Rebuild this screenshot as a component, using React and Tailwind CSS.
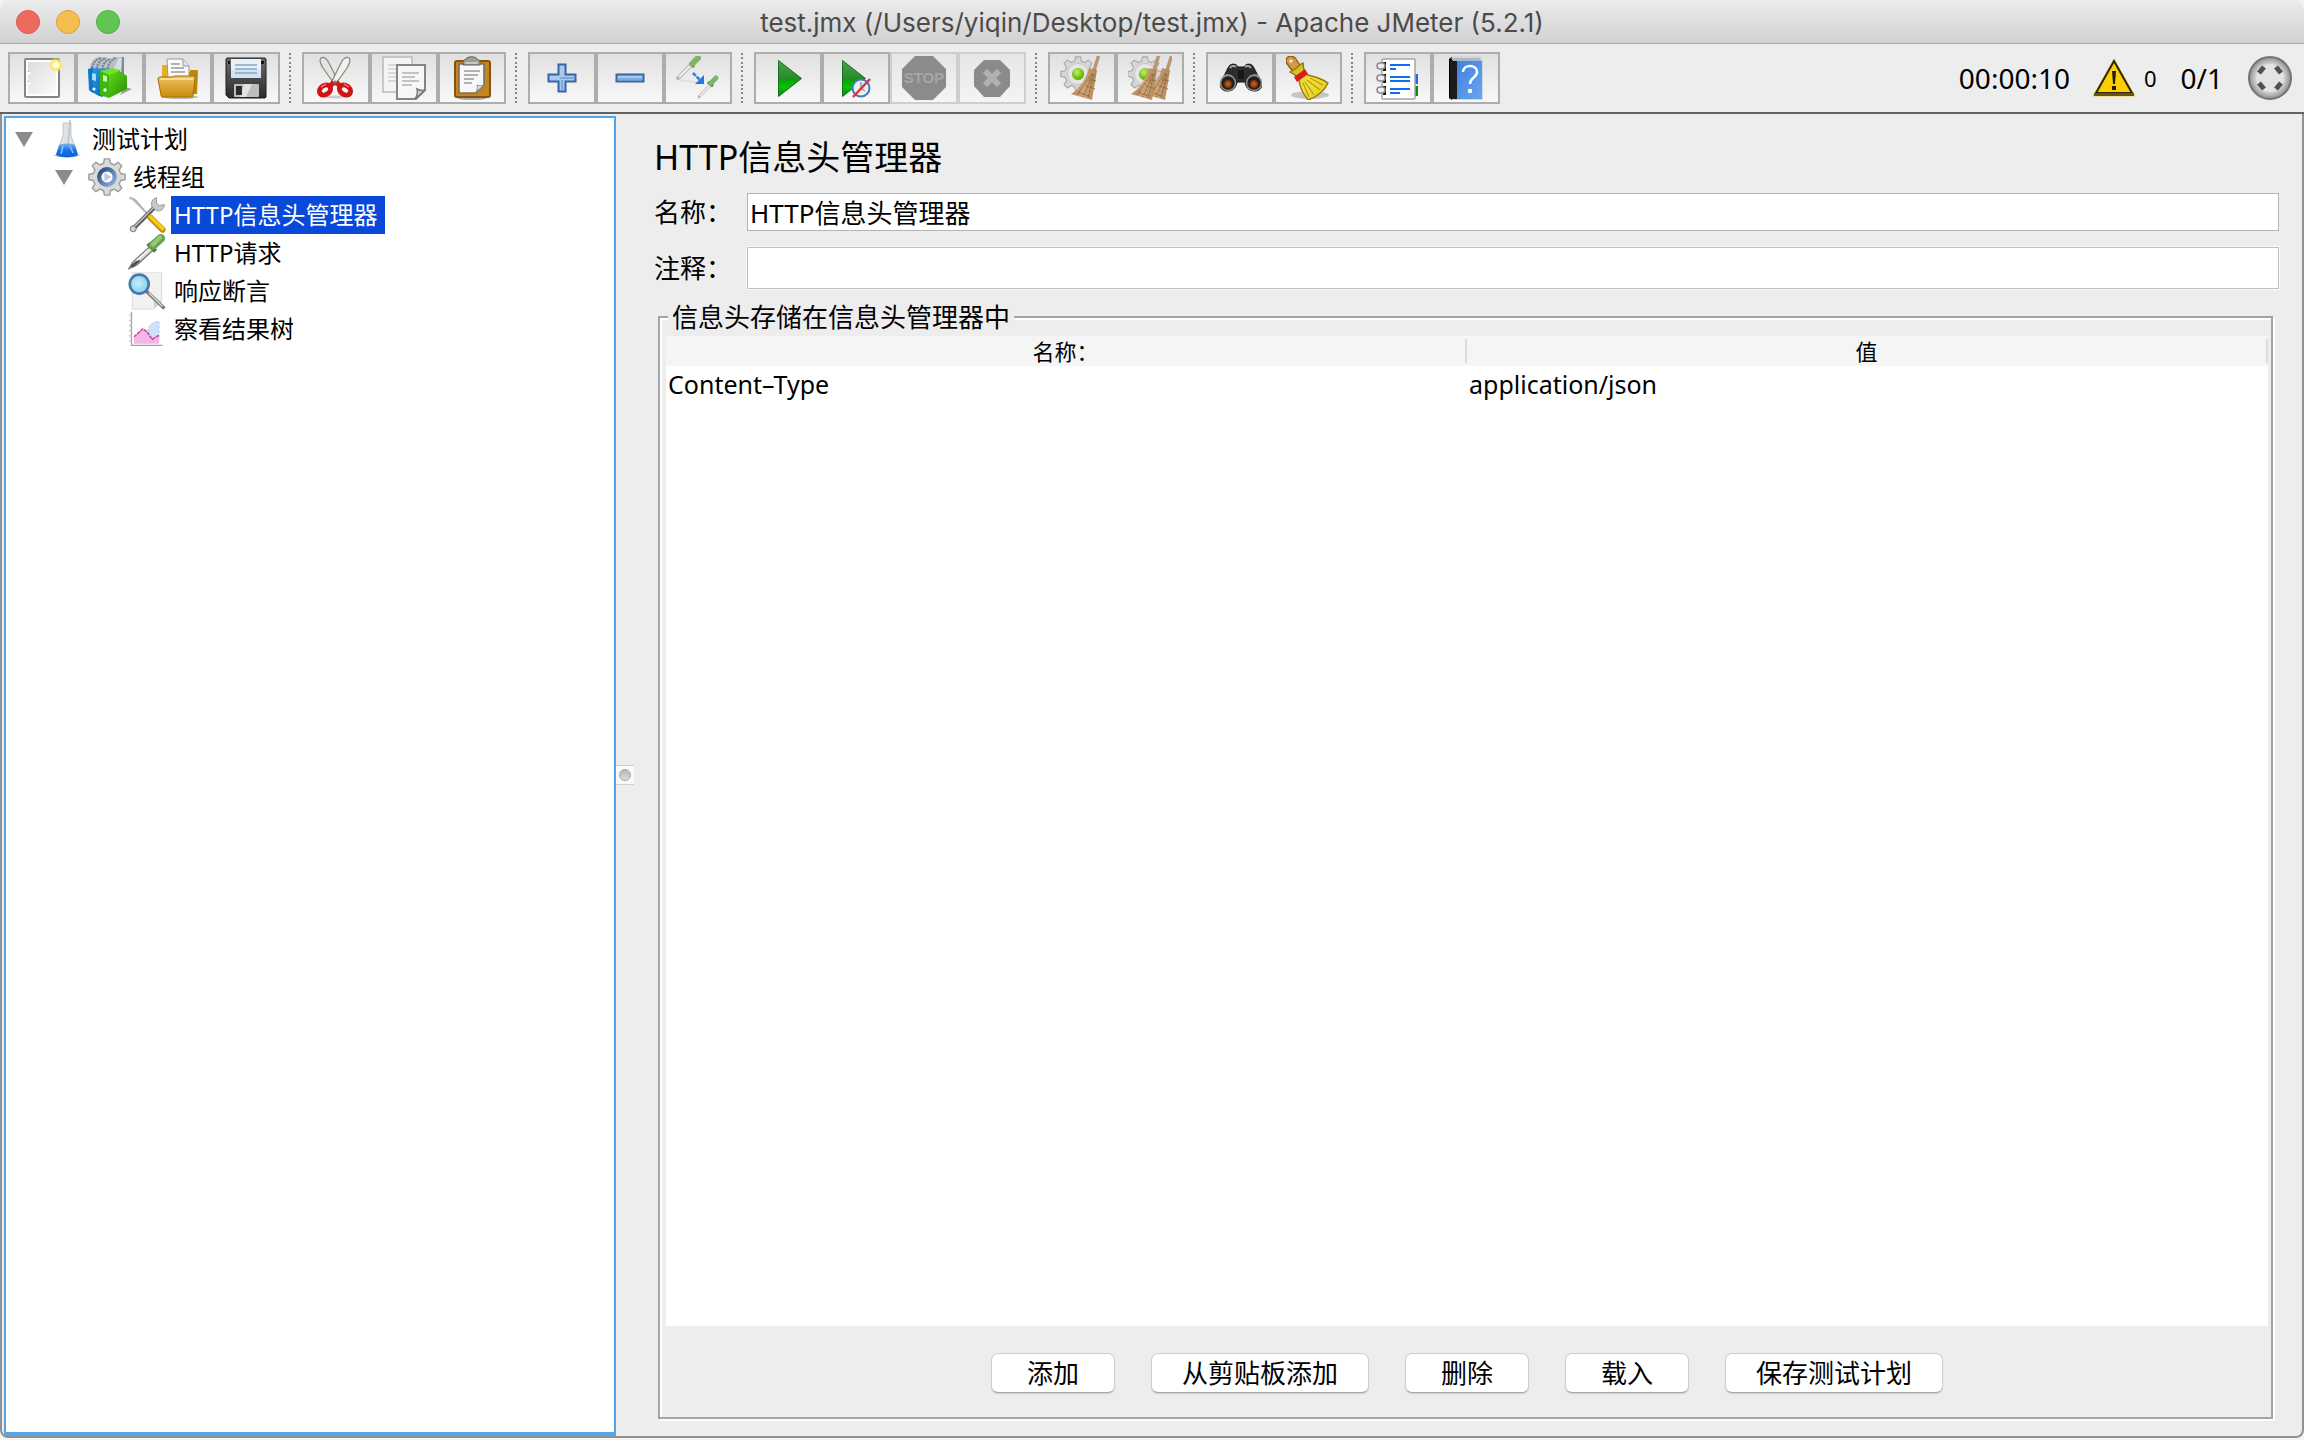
import React, { useState } from "react";

const GEAR =
  "M19 1h6l1 5 4 2 5-3 4 4-3 5 2 4 5 1v6l-5 1-2 4 3 5-4 4-5-3-4 2-1 5h-6l-1-5-4-2-5 3-4-4 3-5-2-4-5-1v-6l5-1 2-4-3-5 4-4 5 3 4-2z";

function Svg({ children, className = "size-11" }) {
  return (
    <svg viewBox="0 0 44 44" className={className} aria-hidden="true">
      {children}
    </svg>
  );
}

function Gradients() {
  return (
    <svg className="absolute size-0" aria-hidden="true">
      <defs>
        <linearGradient id="paper" x1="0" y1="0" x2="1" y2="1">
          <stop offset="0" stopColor="#dcdcdc" />
          <stop offset="1" stopColor="#fbfbfb" />
        </linearGradient>
        <linearGradient id="gold" x1="0" y1="0" x2="0" y2="1">
          <stop offset="0" stopColor="#eec366" />
          <stop offset="1" stopColor="#c98a08" />
        </linearGradient>
        <linearGradient id="green" x1="0" y1="0" x2="0" y2="1">
          <stop offset="0" stopColor="#4fa254" />
          <stop offset="0.48" stopColor="#2c8a2c" />
          <stop offset="0.52" stopColor="#06a006" />
          <stop offset="0.75" stopColor="#05c405" />
          <stop offset="1" stopColor="#0c7a0c" />
        </linearGradient>
        <linearGradient id="binderGreen" x1="0" y1="0" x2="1" y2="1">
          <stop offset="0" stopColor="#5edb12" />
          <stop offset="1" stopColor="#2c8c08" />
        </linearGradient>
        <linearGradient id="binderBlue" x1="0" y1="0" x2="1" y2="1">
          <stop offset="0" stopColor="#2fa0ec" />
          <stop offset="1" stopColor="#0b6cb5" />
        </linearGradient>
        <linearGradient id="disk" x1="0" y1="0" x2="0" y2="1">
          <stop offset="0" stopColor="#6a6a6c" />
          <stop offset="1" stopColor="#2b2b2d" />
        </linearGradient>
        <linearGradient id="straw" x1="0" y1="0" x2="1" y2="0">
          <stop offset="0" stopColor="#b98b5a" />
          <stop offset="0.5" stopColor="#cda377" />
          <stop offset="1" stopColor="#b08556" />
        </linearGradient>
        <linearGradient id="yellow" x1="0" y1="0" x2="1" y2="1">
          <stop offset="0" stopColor="#c7a60c" />
          <stop offset="0.5" stopColor="#f3e23c" />
          <stop offset="1" stopColor="#e0c818" />
        </linearGradient>
        <linearGradient id="book" x1="0" y1="0" x2="1" y2="1">
          <stop offset="0" stopColor="#3f83dd" />
          <stop offset="1" stopColor="#69a4ee" />
        </linearGradient>
        <linearGradient id="flaskBlue" x1="0" y1="0" x2="0" y2="1">
          <stop offset="0" stopColor="#7db4ee" />
          <stop offset="0.5" stopColor="#1673e8" />
          <stop offset="1" stopColor="#0b5fd6" />
        </linearGradient>
        <linearGradient id="blueRing" x1="0" y1="0" x2="1" y2="1">
          <stop offset="0" stopColor="#28467c" />
          <stop offset="1" stopColor="#8fb2e0" />
        </linearGradient>
        <radialGradient id="sun">
          <stop offset="0" stopColor="#fffef0" />
          <stop offset="0.45" stopColor="#fdf9b8" />
          <stop offset="0.65" stopColor="#f6e660" />
          <stop offset="1" stopColor="#f6e660" stopOpacity="0.2" />
        </radialGradient>
        <radialGradient id="lime" cx="0.4" cy="0.35">
          <stop offset="0" stopColor="#c5f070" />
          <stop offset="1" stopColor="#6cb80e" />
        </radialGradient>
        <radialGradient id="lens">
          <stop offset="0" stopColor="#c06a28" />
          <stop offset="0.6" stopColor="#8a3f10" />
          <stop offset="1" stopColor="#2b1508" />
        </radialGradient>
        <radialGradient id="glass" cx="0.45" cy="0.45">
          <stop offset="0" stopColor="#c4f0fb" />
          <stop offset="1" stopColor="#8bd2ee" />
        </radialGradient>
        <radialGradient id="orb" cx="0.5" cy="0.5">
          <stop offset="0" stopColor="#f2f2f2" />
          <stop offset="0.7" stopColor="#cccccc" />
          <stop offset="1" stopColor="#8d8d8d" />
        </radialGradient>
        <linearGradient id="dot" x1="0" y1="0" x2="0" y2="1">
          <stop offset="0" stopColor="#b4b4b4" />
          <stop offset="1" stopColor="#dedede" />
        </linearGradient>
      </defs>
    </svg>
  );
}

const NewIcon = () => (
  <Svg>
    <rect x="5" y="3" width="34" height="38" rx="1" fill="#fff" stroke="#858585" strokeWidth="2" />
    <rect x="8" y="6" width="28" height="32" fill="url(#paper)" />
    <circle cx="9" cy="17" r="1.5" fill="#fff" />
    <circle cx="9" cy="27" r="1.5" fill="#fff" />
    <path d="M8 15.500h1M8 25.500h1" stroke="#999" />
    <circle cx="36" cy="9" r="7" fill="url(#sun)" />
  </Svg>
);

const TemplatesIcon = () => (
  <Svg>
    <path d="M37 31l7 2-12 6z" fill="#777" opacity=".7" />
    <path d="M2 14C2 6 5 3 10 1h8l3 2 4-2h10v22H3z" fill="#b9c0c5" />
    <path d="M4 12C5 6 9 3 13 2M9 13c0-6 4-9 9-11M14 14c1-6 3-9 8-11M20 13c0-5 3-9 8-11" stroke="#6f7a82" strokeWidth="1.800" strokeDasharray="2 1" fill="none" />
    <path d="M26 12l5-10h4v21h-9z" fill="#d6dde1" />
    <path d="M34 1h2v21h-3z" fill="#7f8a91" />
    <path d="M26 13l6 1v10h-6z" fill="#56b2ee" />
    <path d="M0 13l5-1 10 1v28l-4-1-9-5z" fill="url(#binderBlue)" />
    <path d="M0 13l5-1v25l-4-3z" fill="#0d79c6" />
    <path d="M4 17l4 1v7l-4-1z" fill="#a5dbfb" />
    <path d="M14 12l11 1-4 6-9-3z" fill="#2596e2" />
    <circle cx="6" cy="33" r="1.600" fill="#fff" />
    <path d="M12 15l9 3v24l-9-3z" fill="#3fb80e" />
    <path d="M21 18l9-4 9 6v13L21 42z" fill="url(#binderGreen)" />
    <path d="M12 15l13-3 7 3-11 4z" fill="#72e32c" />
    <path d="M15 19l4 1v6l-4-1z" fill="#c9f8ab" />
    <circle cx="17" cy="34" r="1.700" fill="#fff" />
  </Svg>
);

const OpenIcon = () => (
  <Svg>
    <ellipse cx="24" cy="41" rx="18" ry="2" fill="#bbb" />
    <path d="M6 11c0-1 1-2 2-2h4v7h22V14h7c1 0 1 1 1 2l-1 22H8z" fill="#c08409" />
    <path d="M6 11c0-1 1-2 2-2h4v12H6z" fill="#e8ac2b" />
    <path d="M11 3h16l6 7v12H12z" fill="#fafafa" stroke="#9b9b9b" />
    <path d="M27 3v7h6" fill="#dfe6ea" stroke="#8d989e" />
    <path d="M15 8h9M15 12h13M15 16h14" stroke="#9a9a9a" strokeWidth="1.500" />
    <path d="M2 23c0-2 1-2 3-2h11l3-1h18c2 0 2 1 2 3l-2 16c0 2-1 2-2 2H7c-2 0-2-1-2-2z" fill="url(#gold)" stroke="#a87000" />
    <path d="M4 23h33" stroke="#f9dc93" strokeWidth="2" />
  </Svg>
);

const SaveIcon = () => (
  <Svg>
    <path d="M3 2h38l1 1v38l-1 1H5l-3-3V3z" fill="url(#disk)" stroke="#1e1e1f" />
    <path d="M7 3h30v19H7z" fill="#e9f2fb" />
    <path d="M7 14h30v8H7z" fill="#d3e2f2" />
    <path d="M11 9h22M11 13h22M11 17h22" stroke="#86a5c3" strokeWidth="1.500" />
    <rect x="10" y="28" width="25" height="13" rx="1" fill="#bdbdbd" />
    <path d="M20 28h8l-6 13h-6z" fill="#e2e2e2" />
    <rect x="12" y="30" width="6" height="9" fill="#2b2b2b" />
    <path d="M37 5h3v3h-3zM4 5h2v3H4z" fill="#151515" />
  </Svg>
);

const CutIcon = () => (
  <Svg>
    <ellipse cx="22" cy="41" rx="12" ry="1.500" fill="#ccc" />
    <path d="M7 2c3-2 6 1 8 5l10 20-4 2L9 12C6 7 5 4 7 2z" fill="#e4e4e0" stroke="#8a8a86" strokeWidth="1.300" />
    <path d="M35 2c-3-2-6 1-8 5L17 27l4 2 12-17c3-5 4-8 2-10z" fill="#f1f1ee" stroke="#8a8a86" strokeWidth="1.300" />
    <path d="M20 26l-4 4M22 26l4 4" stroke="#d41c1c" strokeWidth="5" />
    <ellipse cx="11" cy="34" rx="6" ry="4.500" fill="none" stroke="#cf1414" strokeWidth="5" transform="rotate(-35 11 34)" />
    <ellipse cx="31" cy="34" rx="6" ry="4.500" fill="none" stroke="#cf1414" strokeWidth="5" transform="rotate(35 31 34)" />
    <path d="M7 31l5-3M35 31l-5-3" stroke="#f46b6b" strokeWidth="1.500" />
    <circle cx="21" cy="26" r="1.500" fill="#777" />
  </Svg>
);

const CopyIcon = () => (
  <Svg>
    <path d="M1 1h29v35H1z" fill="#f4f4f4" stroke="#b9b9b9" strokeWidth="1.500" />
    <path d="M6 9h18M6 13h8M6 17h8M6 21h8M6 25h8" stroke="#cfcfcf" strokeWidth="1.500" />
    <path d="M15 9h28v25l-9 9H15z" fill="#f7f7f7" stroke="#858585" strokeWidth="2" />
    <path d="M43 34c-3 1-6 0-8-1 1 3 0 7-2 10z" fill="#d5d8cf" stroke="#777b70" strokeWidth="1.500" />
    <path d="M20 17h17M20 21h13M20 25h17M20 29h10" stroke="#b3b3b3" strokeWidth="1.600" />
  </Svg>
);

const PasteIcon = () => (
  <Svg>
    <ellipse cx="22" cy="42" rx="15" ry="2" fill="#aaa" />
    <rect x="5" y="5" width="35" height="36" rx="2" fill="#c58422" stroke="#84540d" strokeWidth="2" />
    <path d="M9 8h25v21l-8 8H9z" fill="#f8f8f8" stroke="#77705f" strokeWidth="1.600" />
    <path d="M34 29c-3 1-5 1-7 0 1 3 0 6-2 8z" fill="#e4e4e4" stroke="#8a8a8a" />
    <path d="M14 15h16M14 19h14M14 23h10M14 27h8" stroke="#999" strokeWidth="1.600" />
    <path d="M13 9V5c0-1 2-1 3-2 1-3 10-3 11 0 1 1 3 1 3 2v4z" fill="#9c9d94" stroke="#5f605a" />
    <path d="M15 7h13" stroke="#c8c9c1" strokeWidth="2" />
  </Svg>
);

const PlusIcon = () => (
  <Svg>
    <path d="M18.500 8.500h7v10h10v7h-10v10h-7v-10h-10v-7h10z" fill="#a9c9ee" stroke="#3465a4" strokeWidth="2" />
    <path d="M20 22h14M22 24v10" stroke="#7ea9dc" strokeWidth="2" />
  </Svg>
);

const MinusIcon = () => (
  <Svg>
    <rect x="8.500" y="18.500" width="27" height="7" fill="#a9c9ee" stroke="#3465a4" strokeWidth="2" />
    <path d="M10 23h24" stroke="#7ea9dc" strokeWidth="2" />
  </Svg>
);

const ToggleIcon = () => (
  <Svg>
    <path d="M3 24l8 1 9 1" stroke="#ddd" strokeWidth="1.500" />
    <path d="M2 22L15 9" stroke="#b9b9b9" strokeWidth="4" strokeLinecap="round" />
    <path d="M3 21L15 9" stroke="#f1f1f1" strokeWidth="2" />
    <path d="M14 7l4 4" stroke="#4b7a35" strokeWidth="3" />
    <path d="M16 8l6-6" stroke="#7fb566" strokeWidth="6" strokeLinecap="round" />
    <path d="M23 41l12-13" stroke="#bbb" strokeWidth="3" strokeLinecap="round" />
    <path d="M24 40l11-12" stroke="#f1f1f1" strokeWidth="1.500" />
    <path d="M32 26l5 4" stroke="#4b7a35" strokeWidth="3" />
    <path d="M35 27l5-5" stroke="#7fb566" strokeWidth="5" strokeLinecap="round" />
    <path d="M17 17l7 7" stroke="#2a7bf2" strokeWidth="2.500" strokeDasharray="4 1" />
    <path d="M28 19v9h-9z" fill="#2176f2" />
  </Svg>
);

const StartIcon = () => (
  <Svg>
    <path d="M12.500 4.500L35.500 22.500L12.500 40.500z" fill="url(#green)" stroke="#1b6e1b" />
  </Svg>
);

const StartNoPauseIcon = () => (
  <Svg>
    <path d="M8.500 4.500L31.500 22.500L8.500 40.500z" fill="url(#green)" stroke="#1b6e1b" />
    <circle cx="27" cy="32" r="8.500" fill="#eaf0f4" stroke="#3d7dbd" strokeWidth="2" />
    <path d="M27 26v6l4 3" stroke="#9a9a9a" strokeWidth="1.500" fill="none" />
    <path d="M19 41l17-18" stroke="#e03434" strokeWidth="2.500" />
  </Svg>
);

const StopIcon = () => (
  <Svg>
    <path d="M13 0h18l13 13v18L31 44H13L0 31V13z" fill="#8b8b8b" />
    <text x="22" y="27" textAnchor="middle" fontSize="15" fontWeight="700" fontFamily="Liberation Sans, sans-serif" fill="#a6a6a6">
      STOP
    </text>
  </Svg>
);

const ShutdownIcon = () => (
  <Svg>
    <path d="M14 4h16l10 10v16L30 41H14L4 30V14z" fill="#8b8b8b" />
    <path d="M15 15l14 14M29 15L15 29" stroke="#b1b1b1" strokeWidth="6" />
  </Svg>
);

function MiniGear({ x = 0 }) {
  return (
    <g transform={`translate(${x} 0) scale(.82)`}>
      <path d={GEAR} fill="#d6d6d6" stroke="#a9a9a9" strokeWidth="1.400" />
      <circle cx="22" cy="22" r="13" fill="#e6e6e6" stroke="#c2c2c2" />
      <circle cx="22" cy="22" r="7.500" fill="url(#lime)" />
    </g>
  );
}

function Besom({ x = 0 }) {
  return (
    <g transform={`translate(${x} 0)`}>
      <path d="M38.500 0l-5 16" stroke="#b99670" strokeWidth="3.500" />
      <path d="M29 12l8 2-5 30-21-6c8-5 15-15 18-26z" fill="url(#straw)" />
      <path d="M32 17l-15 22M33 18l-10 23M34 18l-6 24M29 24l7 1M26 30l9 3M18 36l12 5" stroke="#8f6a42" strokeWidth="1" strokeDasharray="3 1" />
    </g>
  );
}

const ClearIcon = () => (
  <Svg>
    <MiniGear />
    <Besom />
  </Svg>
);

const ClearAllIcon = () => (
  <Svg>
    <MiniGear x={-1} />
    <Besom x={5} />
    <Besom x={-8} />
  </Svg>
);

const SearchIcon = () => (
  <Svg>
    <path d="M10 12c2-5 8-5 10-1h6c2-4 8-4 10 1l7 14c2 5-1 9-6 9-6 0-9-3-10-9h-8c-1 6-4 9-10 9-5 0-8-4-6-9z" fill="#2c2c2e" stroke="#111" />
    <path d="M5 21c3-3 8-2 10 1M31 22c2-3 8-4 10-1M12 12c1-2 4-3 6-1M27 11c2-2 5-1 6 1" stroke="#9fa4a8" strokeWidth="2" fill="none" />
    <path d="M20 14h6v9h-6z" fill="#17171a" />
    <circle cx="10" cy="27" r="7.500" fill="#23201f" stroke="#8f8f8f" strokeWidth="1.500" />
    <circle cx="10" cy="28" r="5" fill="url(#lens)" />
    <circle cx="36" cy="27" r="7.500" fill="#23201f" stroke="#8f8f8f" strokeWidth="1.500" />
    <circle cx="36" cy="28" r="5" fill="url(#lens)" />
  </Svg>
);

const SearchResetIcon = () => (
  <Svg>
    <ellipse cx="24" cy="39" rx="19" ry="4" fill="#c6c6c6" />
    <path d="M1 2c2-3 7-2 9 1l5 8-7 6-6-8C0 7-1 4 1 2z" fill="#d29a4b" stroke="#8b5a14" strokeWidth="1.300" />
    <circle cx="5" cy="5" r="1.500" fill="#fff3d8" />
    <path d="M4 16l5-3 6-5 2-1 1 8 4 4c8 2 16 5 20 8-3 7-11 14-20 17-4-5-8-12-9-20l-4-5z" fill="url(#yellow)" stroke="#94780a" strokeWidth="1.400" />
    <path d="M21 24l13 10M19 26l9 13M24 22l13 7M17 27l6 14" stroke="#b59a10" strokeWidth="1.200" />
    <path d="M8 21l11-8 3 5-11 8z" fill="#d91e1e" />
  </Svg>
);

const FunctionIcon = () => (
  <Svg>
    <rect x="37" y="18" width="5" height="10" fill="#1c6fe6" />
    <rect x="37" y="30" width="5" height="10" fill="#118a11" />
    <rect x="6" y="3" width="33" height="40" rx="1" fill="#fff" stroke="#a5a5a5" strokeWidth="1.500" />
    {[11, 23, 35].map((y) => (
      <g key={y}>
        <rect x="7" y={y - 5} width="3" height="9" fill="#111" />
        <rect x="1" y={y - 4} width="8" height="6" rx="3" fill="#eee" stroke="#8b8b8b" strokeWidth="1.500" />
      </g>
    ))}
    <path d="M14 9h20M14 13h6M14 21h20M14 25h20M14 33h20M14 37h10" stroke="#0f6df0" strokeWidth="2" />
  </Svg>
);

const HelpIcon = () => (
  <Svg>
    <path d="M7 0h30l2 4v40H8l-3-2V2z" fill="#cfd8e2" />
    <path d="M5 3l3-2v43l-3-2z" fill="#000" />
    <rect x="6" y="4" width="7" height="39" fill="#1c1c1e" />
    <rect x="13" y="5" width="25" height="38" fill="url(#book)" />
    <path d="M7 2h29l1 3H9z" fill="#aab7c4" />
    <path d="M19 16c0-8 14-8 14 0 0 6-7 5-7 12" stroke="#fff" strokeWidth="2.500" fill="none" />
    <circle cx="26" cy="35" r="2.300" fill="#fff" />
  </Svg>
);

const TOOL_GROUPS = [
  [["新建", NewIcon], ["模板", TemplatesIcon], ["打开", OpenIcon], ["保存", SaveIcon]],
  [["剪切", CutIcon], ["复制", CopyIcon], ["粘贴", PasteIcon]],
  [["展开", PlusIcon], ["折叠", MinusIcon], ["切换", ToggleIcon]],
  [["启动", StartIcon], ["不停顿启动", StartNoPauseIcon], ["停止", StopIcon, true], ["关闭", ShutdownIcon, true]],
  [["清除", ClearIcon], ["清除全部", ClearAllIcon]],
  [["查找", SearchIcon], ["重置查找", SearchResetIcon]],
  [["函数助手", FunctionIcon], ["帮助", HelpIcon]],
];

function ToolButton({ label, icon: Icon, disabled }) {
  return (
    <button
      type="button"
      aria-label={label}
      disabled={disabled}
      className="flex h-[52px] w-[68px] items-center justify-center border-2 border-[#adadad] bg-linear-to-b from-[#e0e0e0] to-[#f8f8f8] disabled:border-[#cecece] disabled:from-[#e6e6e6] disabled:to-[#f4f4f4]"
    >
      <Icon />
    </button>
  );
}

function DottedSeparator() {
  return (
    <div className="mr-[11px] ml-[9px] flex h-[50px] w-[2px] flex-col justify-between">
      {Array.from({ length: 12 }, (_, i) => (
        <span key={i} className="size-[2px] bg-[#858585]" />
      ))}
    </div>
  );
}

function TitleBar() {
  return (
    <header className="grid h-11 shrink-0 grid-cols-[1fr_auto_1fr] items-center rounded-t-[10px] border-b border-[#a9a9a9] bg-linear-to-b from-[#ececec] to-[#d1d1d1] px-4">
      <div className="flex gap-4">
        <button type="button" aria-label="关闭窗口" className="size-6 rounded-full border border-[#d95a50] bg-[#ed6a5f]" />
        <button type="button" aria-label="最小化" className="size-6 rounded-full border border-[#d9a03c] bg-[#f5bf4f]" />
        <button type="button" aria-label="最大化" className="size-6 rounded-full border border-[#4fae41] bg-[#61c554]" />
      </div>
      <h1 className="pt-[2px] font-[Inter,sans-serif] text-[26px] leading-8 text-[#4b4b4b]">
        test.jmx (/Users/yiqin/Desktop/test.jmx) - Apache JMeter (5.2.1)
      </h1>
    </header>
  );
}

function Toolbar() {
  return (
    <div className="flex shrink-0 items-center justify-between border-b-2 border-[#626262] pt-2 pr-3 pb-2 pl-2">
      <div className="flex items-center">
        {TOOL_GROUPS.map((group, i) => (
          <React.Fragment key={i}>
            {i > 0 && <DottedSeparator />}
            <div className="flex">
              {group.map(([label, icon, disabled]) => (
                <ToolButton key={label} label={label} icon={icon} disabled={disabled} />
              ))}
            </div>
          </React.Fragment>
        ))}
      </div>
      <div className="flex items-center text-[28px] leading-9">
        <span>00:00:10</span>
        <button type="button" aria-label="日志" className="ml-[22px] flex items-center gap-2">
          <svg viewBox="0 0 44 40" className="h-10 w-11" aria-hidden="true">
            <path d="M22 1L43 38H1z" fill="#fbd000" stroke="#f0d34a" strokeWidth="1" />
            <path d="M22 3L40 35H4z" fill="#fdce00" stroke="#2d2712" strokeWidth="2" />
            <path d="M2 35h40v3H2z" fill="#6b5408" />
            <path d="M20 13h4l-1 13h-2zM20 28h4v4h-4z" fill="#231d0a" />
          </svg>
          <span className="text-[22px]">0</span>
        </button>
        <span className="mr-[25px] ml-6">0/1</span>
        <Svg>
          <circle cx="22" cy="22" r="21" fill="url(#orb)" stroke="#747474" strokeWidth="2" />
          <circle cx="22" cy="22" r="14" fill="#e3e3e3" />
          <path d="M11 17l5-6M28 11l5 6M33 27l-5 6M16 33l-5-6" stroke="#505050" strokeWidth="5" />
        </Svg>
      </div>
    </div>
  );
}

const FlaskIcon = () => (
  <svg viewBox="0 0 28 38" className="h-[38px] w-7" aria-hidden="true">
    <path d="M0 35h28l-6 2H6z" fill="#b5b5b5" />
    <path d="M10 3h8v13l7 19c-5 3-17 3-22 0l7-19z" fill="#dfe3e6" stroke="#c3c8cc" />
    <path d="M17 0l-2 24" stroke="#bfc3c6" strokeWidth="1.500" />
    <path d="M6 25c5-2 11-2 16 0l3 10c-5 3-17 3-22 0z" fill="url(#flaskBlue)" />
    <path d="M10 26l-2 8M17 26l3 7" stroke="#8cc0f7" strokeWidth="1.500" />
  </svg>
);

const ThreadGroupIcon = () => (
  <Svg className="size-[38px]">
    <path d={GEAR} fill="#dadada" stroke="#9c9c9c" strokeWidth="1.600" />
    <circle cx="22" cy="22" r="9" fill="#fbfbfb" stroke="url(#blueRing)" strokeWidth="5" />
    <path d="M19 17l8 5-8 5z" fill="#b9cbe4" />
  </Svg>
);

const ToolsIcon = () => (
  <Svg className="size-[38px]">
    <path d="M2 2l6 3 15 17" stroke="#b1b1b1" strokeWidth="3" fill="none" />
    <path d="M3 3l20 20" stroke="#ededed" strokeWidth="1.200" />
    <path d="M6 38L30 14" stroke="#5c5c5c" strokeWidth="5" strokeLinecap="round" />
    <path d="M6 37L30 13" stroke="#c8c8c8" strokeWidth="1.500" />
    <path d="M33 2c-5 1-7 6-5 11l5 4c5 1 9-2 9-7l-6 1-3-3z" fill="#c9c9c9" stroke="#8e8e8e" />
    <circle cx="6" cy="38" r="3.500" fill="#d3d3d3" stroke="#666" />
    <path d="M26 25l14 14" stroke="#c48e05" strokeWidth="7" strokeLinecap="round" />
    <path d="M26 24l14 14" stroke="#fbc81c" strokeWidth="4" strokeLinecap="round" />
  </Svg>
);

const PipetteIcon = () => (
  <Svg className="size-[38px]">
    <path d="M1 40l5-8 20-18 4 4-20 18z" fill="#d7dad7" stroke="#777" strokeWidth="1.500" />
    <path d="M4 38l9-8" stroke="#4c4c4c" strokeWidth="3" />
    <path d="M10 31l14-13" stroke="#fff" strokeWidth="1.500" />
    <path d="M23 11l9 9" stroke="#4f7f3c" strokeWidth="5" />
    <path d="M29 13L38 5" stroke="#6ba354" strokeWidth="10" strokeLinecap="round" />
    <path d="M29 12L37 4" stroke="#93c97a" strokeWidth="5" strokeLinecap="round" />
  </Svg>
);

const MagnifierIcon = () => (
  <Svg className="size-[38px]">
    <path d="M5 0h34v34l-9 9H5z" fill="#f1f1f1" stroke="#d6d6d6" />
    <path d="M39 33l-9 10v-9z" fill="#d2d2d2" />
    <path d="M22 23l19 18" stroke="#777" strokeWidth="4" strokeLinecap="round" />
    <path d="M24 24l16 16" stroke="#ddd" strokeWidth="1.500" />
    <circle cx="13" cy="14" r="11" fill="url(#glass)" stroke="#4b76ab" strokeWidth="3" />
  </Svg>
);

const ChartIcon = () => (
  <Svg className="size-[38px]">
    <path d="M4 2v39h36" stroke="#a2a2a2" strokeWidth="1.500" fill="none" />
    <path d="M1 6h3M1 12h3M1 18h3M1 24h3M1 30h3M1 36h3" stroke="#c5c5c5" strokeWidth="1.500" />
    <path d="M24 30c-3-8 1-16 12-17v22h-8z" fill="#cfe2fb" stroke="#9fc3f0" strokeDasharray="3 2" />
    <path d="M7 39v-8l10-9 5 3 6 9 8-5v10z" fill="#f3b6ea" />
    <path d="M7 31l10-9 5 3 6 9 8-5" stroke="#cf3f8f" strokeWidth="1.800" strokeDasharray="4 1" fill="none" />
  </Svg>
);

const LEAF = { indent: "pl-[122px]", iconBox: "w-[38px]", gap: "ml-[5px]" };

const TREE = [
  { label: "测试计划", icon: FlaskIcon, toggle: true, indent: "pl-[9px]", iconBox: "ml-[20px] w-[28px]", gap: "ml-[8px]" },
  { label: "线程组", icon: ThreadGroupIcon, toggle: true, indent: "pl-[49px]", iconBox: "ml-[15px] w-[38px]", gap: "ml-[4px]" },
  { label: "HTTP信息头管理器", icon: ToolsIcon, ...LEAF },
  { label: "HTTP请求", icon: PipetteIcon, ...LEAF },
  { label: "响应断言", icon: MagnifierIcon, ...LEAF },
  { label: "察看结果树", icon: ChartIcon, ...LEAF },
];

function TestTree() {
  const [selected, setSelected] = useState(2);
  return (
    <nav aria-label="测试计划树" className="w-[612px] shrink-0 border-2 border-b-4 border-[#55a5e6] bg-white pt-[2px]">
      <ul>
        {TREE.map(({ label, icon: Icon, toggle, indent, iconBox, gap }, i) => (
          <li key={label} className={`flex h-[38px] items-center ${indent}`}>
            {toggle && (
              <button type="button" aria-label={`折叠${label}`} className="w-[18px]">
                <svg viewBox="0 0 18 15" className="h-[15px] w-[18px]" aria-hidden="true">
                  <path d="M0 0h18L9 15z" fill="#8b8b8b" />
                </svg>
              </button>
            )}
            <span className={`flex justify-center ${iconBox}`}>
              <Icon />
            </span>
            <button
              type="button"
              onClick={() => setSelected(i)}
              className={`${gap} h-[38px] pr-2 pl-[3px] text-2xl leading-[38px] ${
                selected === i ? "bg-[#0849da] text-white" : "text-black"
              }`}
            >
              {label}
            </button>
          </li>
        ))}
      </ul>
    </nav>
  );
}

function ActionButton({ children, wide }) {
  return (
    <button
      type="button"
      className={`h-10 rounded-[7px] border border-[#cdcdcd] border-b-[#a9a9a9] bg-white text-[26px] leading-[38px] shadow-[0_1px_1px_#00000022] ${
        wide ? "w-[218px]" : "w-[124px]"
      }`}
    >
      {children}
    </button>
  );
}

function HeaderManager() {
  const [name, setName] = useState("HTTP信息头管理器");
  const [comment, setComment] = useState("");
  return (
    <main className="flex min-w-0 flex-1 flex-col pt-5 pr-[23px] pb-[17px] pl-5">
      <h2 className="text-[34px] leading-[46px]">HTTP信息头管理器</h2>
      <div className="mt-3 flex h-10 items-center text-[26px]">
        <label htmlFor="name" className="w-[93px]">名称：</label>
        <input
          id="name"
          value={name}
          onChange={(e) => setName(e.target.value)}
          className="h-[38px] min-w-0 flex-1 border border-[#b4b4b4] bg-white px-[2px] leading-9 outline-none"
        />
      </div>
      <div className="mt-[14px] flex h-[44px] items-center text-[26px]">
        <label htmlFor="comment" className="w-[93px]">注释：</label>
        <input
          id="comment"
          value={comment}
          onChange={(e) => setComment(e.target.value)}
          className="h-[42px] min-w-0 flex-1 border border-[#bfbfbf] bg-white px-[2px] shadow-[0_0_0_1px_#fafafa] outline-none"
        />
      </div>
      <fieldset className="mt-[8px] mr-[6px] ml-[4px] flex min-h-0 min-w-0 flex-1 flex-col border-2 border-[#a4a4a4] pr-[3px] pl-[6px] shadow-[inset_2px_2px_0_#fff,2px_2px_0_#fff]">
        <legend className="ml-[2px] bg-[#ededed] px-[4px] text-[26px] leading-[38px]">信息头存储在信息头管理器中</legend>
        <div className="flex-1 bg-white">
          <table className="w-full table-fixed border-collapse">
            <thead className="bg-[#f5f5f5] text-[22px]">
              <tr className="h-[30px]">
                {["名称：", "值"].map((title) => (
                  <th key={title} scope="col" className="p-0 font-normal">
                    <div className="border-r-2 border-[#dcdcdc] leading-6">{title}</div>
                  </th>
                ))}
              </tr>
            </thead>
            <tbody className="text-[25px]">
              <tr className="h-9">
                <td className="px-[2px] leading-9">Content–Type</td>
                <td className="px-[2px] leading-9">application/json</td>
              </tr>
            </tbody>
          </table>
        </div>
        <div className="flex justify-center gap-9 pt-[27px] pb-6">
          <ActionButton>添加</ActionButton>
          <ActionButton wide>从剪贴板添加</ActionButton>
          <ActionButton>删除</ActionButton>
          <ActionButton>载入</ActionButton>
          <ActionButton wide>保存测试计划</ActionButton>
        </div>
      </fieldset>
    </main>
  );
}

export default function App() {
  return (
    <div lang="zh-CN" className="flex h-screen flex-col bg-[#f4f4f4] pb-[2px] font-['Noto_Sans','Noto_Sans_CJK_SC',sans-serif] text-black">
      <Gradients />
      <div className="flex min-h-0 flex-1 flex-col rounded-t-[10px] rounded-b-[8px] bg-[#ededed]">
        <TitleBar />
        <Toolbar />
        <div className="flex min-h-0 flex-1 rounded-b-[8px] border-x-2 border-b-2 border-[#919191]">
          <div className="flex pt-[2px] pl-[2px]">
            <TestTree />
          </div>
          <div className="flex w-[18px] shrink-0 items-center">
            <button type="button" aria-label="分隔条" className="flex h-5 w-[18px] items-center justify-center border-y border-[#d0d0d0] bg-[#fafafa]">
              <svg viewBox="0 0 12 12" className="size-3" aria-hidden="true">
                <circle cx="6" cy="6" r="5.500" fill="url(#dot)" stroke="#a8a8a8" />
              </svg>
            </button>
          </div>
          <HeaderManager />
        </div>
      </div>
    </div>
  );
}
